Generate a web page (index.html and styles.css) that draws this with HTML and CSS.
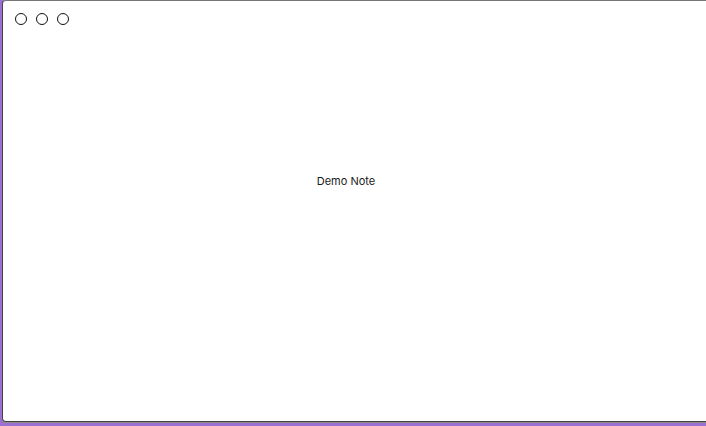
FILE: index.html
```html
<!DOCTYPE html>
<html>
<head>
<meta charset="utf-8">
<link rel="stylesheet" href="styles.css">
</head>
<body>
<div class="window">
  <div class="titlebar">
    <span class="dot"></span>
    <span class="dot"></span>
    <span class="dot"></span>
  </div>
  <div class="content">
    <p class="note">Demo Note</p>
  </div>
</div>
</body>
</html>
```
FILE: styles.css
```css
html, body {
  margin: 0;
  padding: 0;
  width: 706px;
  height: 426px;
  overflow: hidden;
  background: #9a70d2;
}
body {
  font-family: Inter, "Noto Sans", sans-serif;
  padding-left: 2px;
  box-sizing: border-box;
}
.window {
  box-sizing: border-box;
  width: 712px;
  height: 422px;
  background: #ffffff;
  border: 1px solid #444444;
  border-top-color: #777777;
  border-radius: 4px;
  box-shadow: 0 1px 0 #8a8a8a;
  display: flex;
  flex-direction: column;
}
.titlebar {
  display: flex;
  gap: 9px;
  padding: 12px 0 0 12px;
  height: 26px;
  box-sizing: border-box;
}
.dot {
  width: 12px;
  height: 12px;
  box-sizing: border-box;
  border: 1px solid #111111;
  border-radius: 50%;
}
.content {
  flex: 1;
  display: flex;
  justify-content: center;
  padding-top: 147px;
  padding-right: 24px;
}
.note {
  margin: 0;
  font-size: 11px;
  color: #1a1a1a;
  line-height: 14px;
}
```
